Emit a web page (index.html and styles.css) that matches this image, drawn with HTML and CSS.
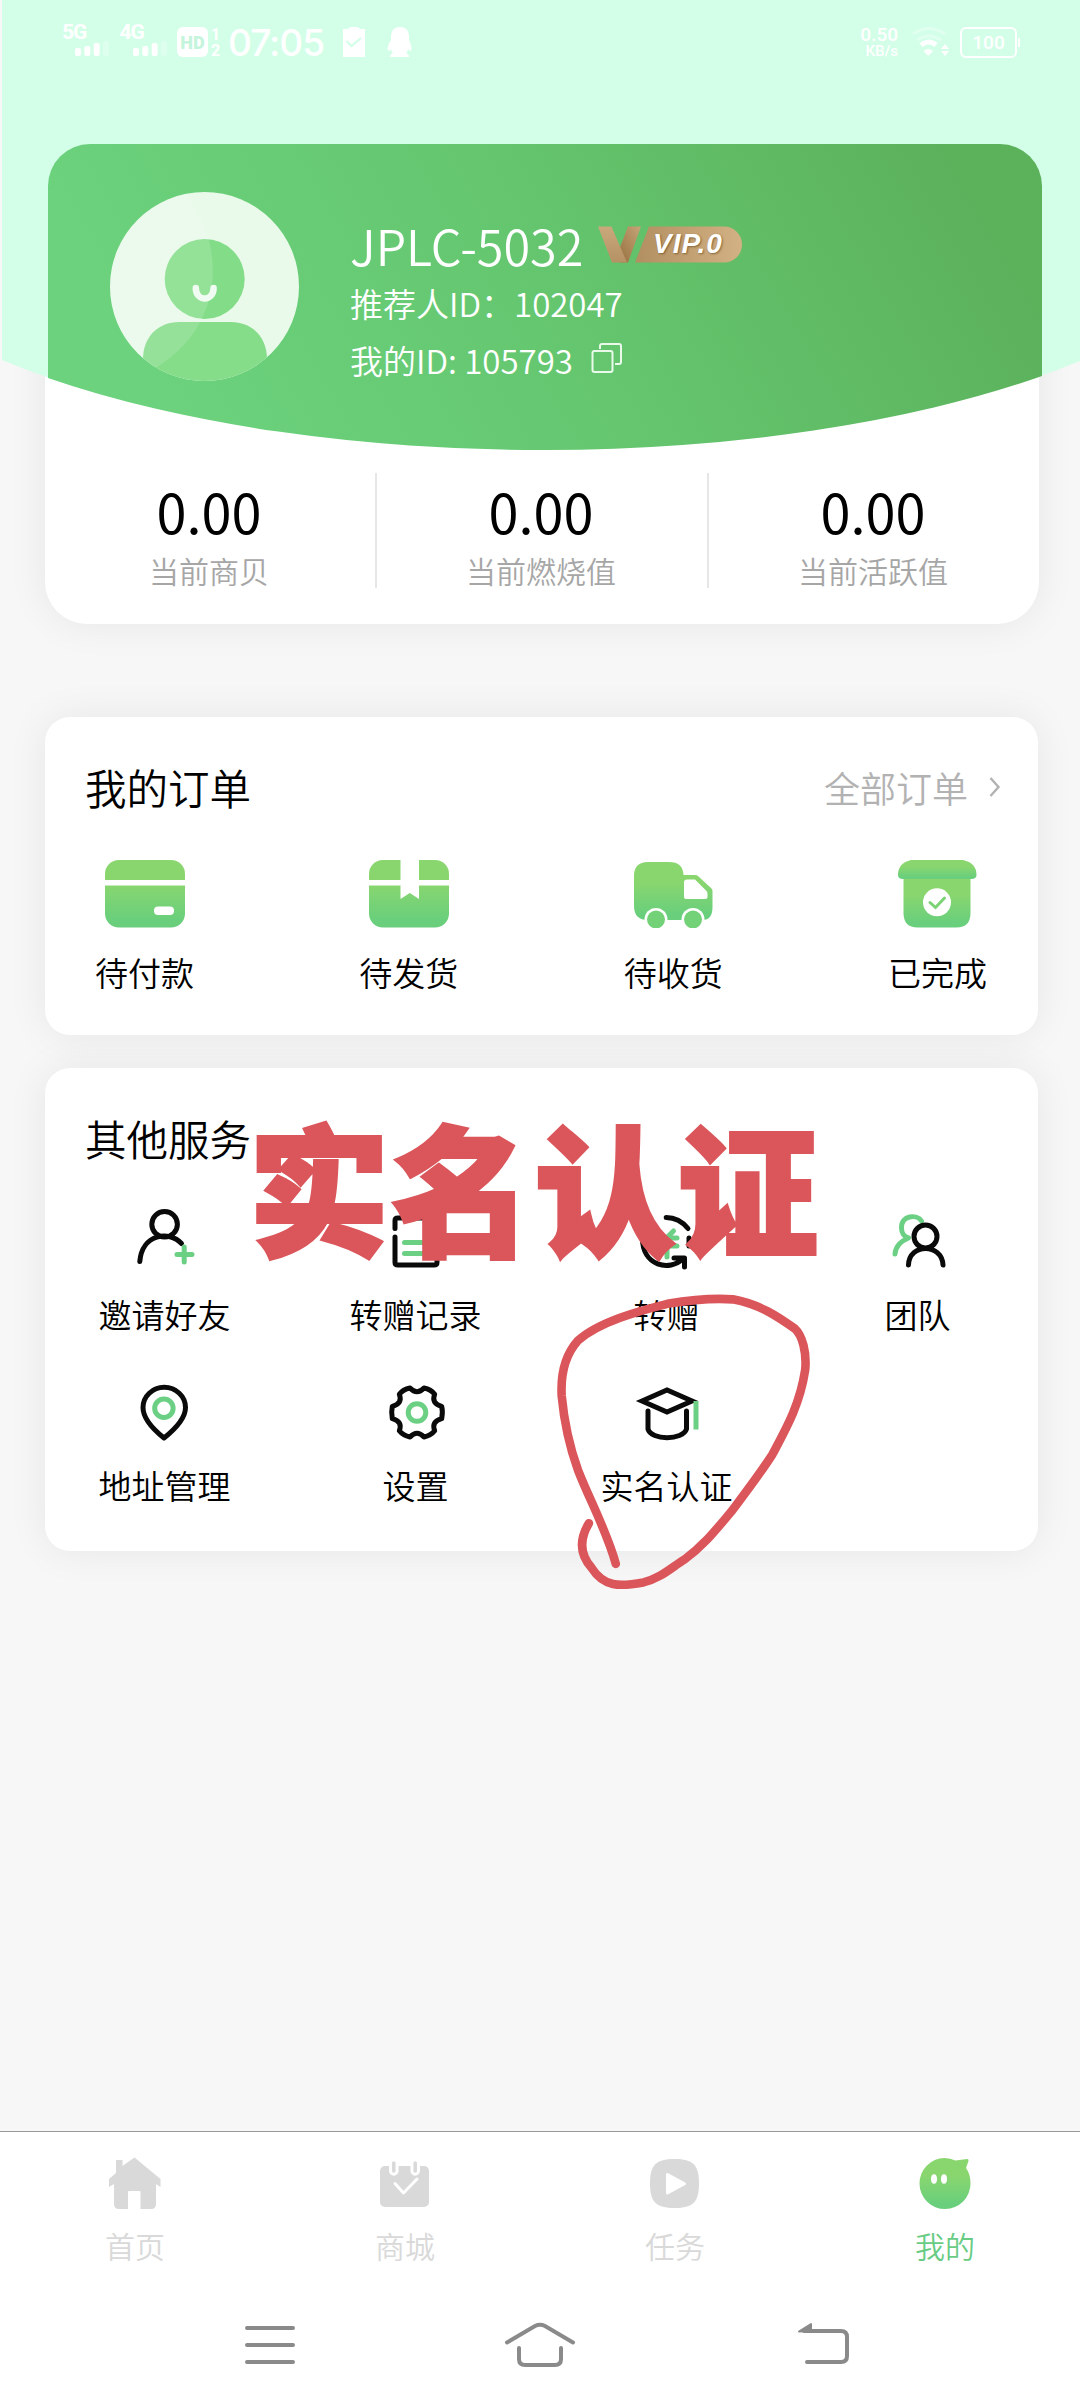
FILE: index.html
```html
<!DOCTYPE html>
<html lang="zh-CN">
<head>
<meta charset="utf-8">
<title>我的</title>
<link rel="stylesheet" href="styles.css">
</head>
<body>
<svg class="defs" width="0" height="0" aria-hidden="true">
  <defs>
    <linearGradient id="leaf" x1="0" y1="0" x2="0" y2="1">
      <stop offset="0.35" stop-color="#89d66f"/><stop offset="0.9" stop-color="#69cf7c"/>
    </linearGradient>
  </defs>
</svg>
<div class="phone">
  <div class="backdrop"></div>

  <header class="status">
    <div class="carrier">
      <span class="net">5G</span>
      <svg class="bars" viewBox="0 0 36 17"><g fill="#fff"><rect y="8" width="6" height="8" rx="2"/><rect x="9.300" y="6" width="6" height="10" rx="2"/><rect x="18.700" y="3" width="6" height="13" rx="2"/><rect x="28" y="1" width="6" height="15" rx="2" opacity=".25"/></g></svg>
    </div>
    <div class="carrier">
      <span class="net">4G</span>
      <svg class="bars" viewBox="0 0 36 17"><g fill="#fff"><rect y="8" width="6" height="8" rx="2"/><rect x="9.300" y="6" width="6" height="10" rx="2"/><rect x="18.700" y="3" width="6" height="13" rx="2"/><rect x="28" y="1" width="6" height="15" rx="2" opacity=".25"/></g></svg>
    </div>
    <span class="hd">HD</span>
    <span class="sims"><span>1</span><span>2</span></span>
    <span class="time">07:05</span>
    <svg class="clip" viewBox="0 0 22 30"><path fill="#fff" d="M0 2h5Q6 0 9 0h4q3 0 4 2h5v28H0z"/><path fill="none" stroke="#d3ffe8" stroke-width="2.200" d="M3.500 14l5 5L18 11"/></svg>
    <svg class="penguin" viewBox="0 0 26 30"><path fill="#fff" d="M13 0C7 0 4 4 4 10v3C1 17 0 21 1 24c1 0 2-1 3-2 0 2 1 3 2 4-2 1-3 2-3 4h19c0-2-1-3-3-4 1-1 2-2 2-4 1 1 2 2 3 2 1-3 0-7-2-11v-3c0-6-3-10-9-10z"/></svg>
    <span class="speed"><span>0.50</span><small>KB/s</small></span>
    <svg class="wifi" viewBox="0 0 38 30"><g fill="none" stroke="#fff"><path d="M1 7Q17-4 33 7" stroke-width="3" opacity=".3"/><path d="M5 13Q17 5 29 13" stroke-width="3" opacity=".3"/><path d="M9 18q8-6 15 0" stroke-width="5"/></g><path fill="#fff" d="M11.500 24q5-4 9.500 0l-4.700 5zM29 22l4-5 4 5zM29 24l4 5 4-5z"/></svg>
    <span class="battery">100</span>
  </header>

  <section class="member">
    <div class="member-head">
      <svg class="avatar" viewBox="0 0 189 189">
        <clipPath id="round"><circle cx="94.500" cy="94.500" r="94.500"/></clipPath>
        <g clip-path="url(#round)">
          <rect width="189" height="189" fill="#e9faea"/>
          <circle cx="94.700" cy="87" r="40" fill="#83dc88"/>
          <path fill="#85dd8a" d="M33 189v-22c0-22 15-37 36-37h52c21 0 36 15 36 37v22z"/>
          <path fill="#fff" opacity=".14" d="M0 0H74C96 28 103 55 103 80C102 120 82 153 47 175L0 189z"/>
        </g>
        <path fill="none" stroke="#f0fcf1" stroke-width="6.500" stroke-linecap="round" d="M85.800 96c0 14 17.800 14 17.800 0"/>
      </svg>
      <div class="identity">
        <div class="name-row">
          <span class="name">JPLC-5032</span>
          <span class="vip">
            <svg class="vip-v" viewBox="0 0 144 37">
              <defs>
                <linearGradient id="va" x1="0" y1="0" x2="0" y2="1"><stop offset="0" stop-color="#c9a97b"/><stop offset="1" stop-color="#b59164"/></linearGradient>
                <linearGradient id="vb" x1="0" y1="1" x2="1" y2="0"><stop offset="0" stop-color="#97703f"/><stop offset="1" stop-color="#c6a577"/></linearGradient>
                <linearGradient id="vc" x1="0" y1="0" x2="1" y2="0"><stop offset="0" stop-color="#b28f60"/><stop offset="1" stop-color="#d2b184"/></linearGradient>
              </defs>
              <path fill="url(#vb)" d="M30 0.500h13L30 36.500h-7.500l-1-14z"/>
              <path fill="url(#va)" d="M0 0.500h13.500L29 36.500H14z"/>
              <path fill="url(#vc)" d="M51 0.500h75a18 18 0 0 1 0 36H37z"/>
            </svg>
            <b>VIP.0</b>
          </span>
        </div>
        <div class="line">推荐人ID：102047</div>
        <div class="line own"><span>我的ID: 105793</span><svg class="copy" viewBox="0 0 32 32"><g fill="none" stroke="#e9faea" stroke-width="2"><rect x="1.500" y="9" width="20" height="21" rx="2"/><path d="M9 7V4q0-2 2-2h17q2 0 2 2v16q0 2-2 2h-4"/></g></svg></div>
      </div>
    </div>
    <div class="stats">
      <div class="stat"><strong>0.00</strong><span>当前商贝</span></div>
      <div class="stat"><strong>0.00</strong><span>当前燃烧值</span></div>
      <div class="stat"><strong>0.00</strong><span>当前活跃值</span></div>
    </div>
  </section>

  <section class="card orders">
    <div class="card-head">
      <h2>我的订单</h2>
      <a class="more">全部订单<svg viewBox="0 0 12 22"><path fill="none" stroke="#b2b2b2" stroke-width="2.400" d="M1.500 2L9.500 11L1.500 20"/></svg></a>
    </div>
    <div class="order-row">
      <div class="order">
        <svg viewBox="0 0 80 68"><rect width="80" height="67.500" rx="14" fill="url(#leaf)"/><path fill="#fff" d="M0 20h80v5.500H0z"/><rect x="49" y="46.500" width="20" height="8.500" rx="4" fill="#fff"/></svg>
        <span>待付款</span>
      </div>
      <div class="order">
        <svg viewBox="0 0 80 68"><rect width="80" height="67.500" rx="14" fill="url(#leaf)"/><path fill="#fff" d="M0 20h80v5.500H0zM31.500 0h18.500v39l-9.200-6-9.300 6z"/></svg>
        <span>待发货</span>
      </div>
      <div class="order">
        <svg viewBox="0 0 80 68"><path fill="url(#leaf)" d="M15 2h21q14 0 14.500 13H62q2 0 3 1l13 12q1.500 1 1.500 3v16q0 13-10 13H15Q1 60 1 46V16Q1 2 15 2z"/><path fill="#fff" d="M54 19.500h8l11 11q1.500 1 1.500 3V37q0 2-2 2H53q-2 0-2-2V22q0-2.500 3-2.500z"/><circle cx="23" cy="59.500" r="11.500" fill="#fff"/><circle cx="60" cy="59.500" r="11.500" fill="#fff"/><g fill="#73d177"><circle cx="23" cy="59.500" r="9"/><circle cx="60" cy="59.500" r="9"/></g></svg>
        <span>待收货</span>
      </div>
      <div class="order">
        <svg viewBox="0 0 80 68"><path fill="url(#leaf)" d="M6.500 17h67v36q0 14.500-14 14.500H20.500Q6.500 67.500 6.500 53z"/><path fill="url(#leaf)" d="M14 0h52q13.500 3 13.500 15 0 4-5 4H6q-5 0-5-4Q1 3 14 0z"/><circle cx="40" cy="42.300" r="14" fill="#fff"/><path fill="none" stroke="#7bd375" stroke-width="3" stroke-linecap="round" d="M33 42.500l5.500 5L47.500 38"/></svg>
        <span>已完成</span>
      </div>
    </div>
  </section>

  <section class="card services">
    <div class="card-head"><h2>其他服务</h2></div>
    <div class="service-grid">
      <div class="service">
        <svg viewBox="0 0 60 60"><circle cx="29.600" cy="16.300" r="12.800"/><path d="M4.800 53.500C7 26 34 22 46.500 35.500"/><path class="accent" d="M49.200 39v15M42 46.500h15"/></svg>
        <span>邀请好友</span>
      </div>
      <div class="service">
        <svg viewBox="0 0 60 60"><path d="M9 20.500V12.500q0-2.500 3-2.500h36q3 0 3 2.500v42q0 2.500-3 2.500H12q-3 0-3-2.500V29"/><path class="accent" d="M18.500 34.500h22M18.500 45.500h22"/></svg>
        <span>转赠记录</span>
      </div>
      <div class="service">
        <svg viewBox="0 0 60 60"><path d="M29.200 9.500Q42 9.500 51 20.500M52 30v8M5.500 30C5 58 33 64 46 50.500M37 50h10.500v9"/><path class="accent" d="M29.500 30l7-7M21 30h19M21 38h19M30 30v19"/></svg>
        <span>转赠</span>
      </div>
      <div class="service">
        <svg viewBox="0 0 60 60"><path class="accent" d="M33.500 13C29 6 13 7 13.500 20c0 5 3 9 7 10Q8 35 7 46"/><circle cx="37.500" cy="28.500" r="11.500"/><path d="M20.500 57C21 35 54 35 55 57"/></svg>
        <span>团队</span>
      </div>
      <div class="service low">
        <svg viewBox="0 0 60 60"><path d="M29 55C19 47 8 36 8 24.500a21 20 0 0 1 42.500 0C50.500 36 39 47 29 55z"/><circle class="accent" cx="28.900" cy="25.300" r="9.200"/></svg>
        <span>地址管理</span>
      </div>
      <div class="service low">
        <svg viewBox="-31 -29.500 60 60"><path d="M24.700-6.200Q26-1 24.700 6.200Q14 9 17.700 18.300Q14 23 7 24.500Q0 17 -7 24.500Q-14 23 -17.700 18.300Q-14 9 -24.700 6.200Q-26 0 -24.700-6.200Q-14-9 -17.700-18.300Q-14-23 -7-24.500Q0-17 7-24.500Q14-23 17.700-18.300Q14-9 24.700-6.200z"/><circle class="accent" r="8.800"/></svg>
        <span>设置</span>
      </div>
      <div class="service low">
        <svg viewBox="0 0 60 60"><path class="flat" d="M5 18L30 7L55 18L30 29z"/><path d="M11 28v18c3 11.500 35 11.500 38.500 0V28"/><path class="accent flat" d="M59 18v28.500"/></svg>
        <span>实名认证</span>
      </div>
    </div>
  </section>

  <nav class="tabs">
    <div class="tab">
      <svg viewBox="0 0 60 56"><path fill="#d9d9d9" d="M11 4h6.500v6L29.500 1.500 55.500 23v8L51 28v20q0 5-5 5H35.500V36q0-1-1-1H24q-1 0-1 1v17h-9Q9 53 9 48V28l-5 3v-8l7-6z"/></svg>
      <span>首页</span>
    </div>
    <div class="tab">
      <svg viewBox="0 0 60 56"><rect x="5" y="10" width="49" height="41" rx="5" fill="#d9d9d9"/><g stroke-linecap="round" fill="none"><path stroke="#fff" stroke-width="9.500" d="M18.800 7v8M40.200 7v8"/><path stroke="#d9d9d9" stroke-width="3.500" d="M18.800 7v8M40.200 7v8"/><path stroke="#fff" stroke-width="3" stroke-linejoin="round" d="M20 27.500l8.500 9.500L42 23"/></g></svg>
      <span>商城</span>
    </div>
    <div class="tab">
      <svg viewBox="0 0 60 56"><path fill="#d9d9d9" d="M29.500 3C48 3 54 9 54 27.500S48 52 29.500 52 5 46 5 27.500 11 3 29.500 3z"/><path fill="#fff" stroke="#fff" stroke-width="3" stroke-linejoin="round" d="M22.500 18.500v18.500l17-9.200z"/></svg>
      <span>任务</span>
    </div>
    <div class="tab active">
      <svg viewBox="0 0 60 56"><path fill="url(#leaf)" d="M29.500 2q6 0 11 2.500L52 3q2 0 1.500 2L51 12q4.500 6 4.500 15.500A25.500 25.500 0 1 1 29.500 2z"/><g fill="#fff"><ellipse cx="19" cy="23" rx="3" ry="4.800"/><ellipse cx="29" cy="23" rx="3" ry="4.800"/></g></svg>
      <span>我的</span>
    </div>
  </nav>

  <footer class="sysnav">
    <svg viewBox="0 0 80 50"><path d="M17 8h46M17 25h46M17 42h46"/></svg>
    <svg viewBox="0 0 80 50"><path d="M7 22.500L35 6q5-2.500 10 0l28 16.500M19 28v11q0 6 6 6h30q6 0 6-6V28"/></svg>
    <svg class="back" viewBox="0 0 80 50"><path d="M20 42h34q6 0 6-6V17q0-6-6-6H17"/><path class="solid" d="M12 11.500L24 4v7z"/></svg>
  </footer>

  <div class="note">实名认证</div>
  <svg class="scribble" viewBox="0 0 1568 1568"><path d="M142 1345C118 1385 110 1430 150 1475C185 1530 230 1530 300 1517C350 1505 380 1475 420 1450C475 1410 510 1365 555 1312C600 1252 640 1200 675 1145C715 1070 755 1000 770 900C775 850 762 800 740 780C690 745 640 710 560 695C490 690 430 698 370 708C290 728 170 760 110 815C70 860 60 920 63 975C70 1050 85 1120 110 1190C145 1280 195 1370 220 1463"/></svg>
</div>
</body>
</html>
```
FILE: styles.css
```css
* { box-sizing: border-box; }

body {
  margin: 0;
  font-family: "Noto Sans CJK SC", sans-serif;
  color: #000;
  background: #f6f6f6;
}

.defs { position: absolute; }

.phone {
  position: relative;
  width: 1080px;
  height: 2408px;
  overflow: hidden;
  display: flex;
  flex-direction: column;
  background: #f7f7f7;
  isolation: isolate;
}

/* mint wash with a curved lower edge, behind the profile */
.backdrop {
  position: absolute;
  inset: 0 0 auto 0;
  height: 460px;
  z-index: 1;
  background: #d3ffe8;
  clip-path: path("M2 0H1080V361A720 264 0 0 1 2 360Z");
}

/* status bar */
.status {
  position: relative;
  z-index: 2;
  flex: none;
  height: 144px;
  padding: 24px 63px 0 62px;
  display: flex;
  align-items: flex-start;
  color: #fff;
  font-family: Roboto, sans-serif;
}
.carrier { width: 57.500px; height: 34px; display: flex; flex-direction: column; }
.net { font-size: 21px; line-height: 17px; font-weight: 700; letter-spacing: -1px; }
.bars { width: 36px; height: 17px; margin: -1px 0 0 13px; }
.hd {
  width: 31px; height: 30px; margin-top: 3px;
  border-radius: 6px; background: #fff; color: #c4f5dc;
  font-size: 18px; line-height: 31px; font-weight: 900; text-align: center;
}
.sims { display: flex; flex-direction: column; width: 13px; margin: 3px 0 0 1px; font-size: 16px; line-height: 16px; font-weight: 700; text-align: center; }
.time { width: 100px; margin: 3px 0 0 6px; font: 500 37px/31px Inter, sans-serif; letter-spacing: -1px; white-space: nowrap; }
.clip { width: 22px; height: 30px; margin: 3px 0 0 15px; }
.penguin { width: 26px; height: 30px; margin: 3px 0 0 22px; }
.speed { margin: 3px 14px 0 auto; display: flex; flex-direction: column; text-align: right; font-size: 19px; line-height: 16px; font-weight: 500; }
.speed small { font-size: 15px; line-height: 16px; }
.wifi { width: 38px; height: 30px; margin: 3px 10px 0 0; }
.battery {
  position: relative; width: 57px; height: 31px; margin-top: 3px;
  border: 2px solid #fff; border-radius: 6px;
  font-size: 19px; line-height: 28px; font-weight: 500; text-align: center;
}
.battery::after { content: ""; position: absolute; right: -5px; top: 9px; width: 2px; height: 9px; background: #fff; }

/* profile card */
.member {
  flex: none;
  width: 994px;
  height: 480px;
  margin-left: 45px;
  border-radius: 0 0 42px 42px;
  background: #fff;
  box-shadow: 0 0 40px rgba(0, 0, 0, .07);
}
.member-head {
  position: relative;
  z-index: 2;
  width: 994px;
  height: 306px;
  margin-left: 3px;
  padding: 48px 0 0 62px;
  display: flex;
  background: linear-gradient(60deg, #6cd27d 12%, #64c56e 53%, #5cb15b 92%);
  clip-path: path("M42 0H952A42 42 0 0 1 994 42V232A720 264 0 0 1 0 234V42A42 42 0 0 1 42 0Z");
  color: #fff;
}
.avatar { flex: none; width: 189px; height: 189px; }
.identity { margin-left: 51px; padding-top: 19px; }
.name-row { display: flex; align-items: center; height: 67px; }
.name { width: 232px; font-size: 48.500px; line-height: 66px; font-weight: 350; white-space: nowrap; }
.vip { position: relative; width: 144px; height: 37px; margin: 0 0 0 16px; display: flex; }
.vip-v { position: absolute; inset: 0; width: 144px; height: 37px; }
.vip b {
  position: relative;
  margin-left: 55px;
  font: italic 700 28px/36px "Liberation Sans", sans-serif;
  letter-spacing: 1px;
  text-shadow: 1px 1px 2px rgba(90, 60, 20, .6);
}
.line { display: flex; align-items: center; height: 50px; font-size: 33px; font-weight: 350; white-space: nowrap; }
.own { margin-top: 7px; }
.copy { width: 32px; height: 32px; margin: -4px 0 0 18px; }

.stats { display: flex; margin-top: 23px; height: 115px; }
.stat { flex: 1; display: flex; flex-direction: column; align-items: center; }
.stat + .stat { border-left: 2px solid #e6e6e6; padding-right: 2px; }
.stat strong { font-size: 54px; line-height: 75px; font-weight: 400; }
.stat span { font-size: 30px; line-height: 45px; font-weight: 350; color: #a6a6a6; }
.stat:first-child { padding-right: 2px; }

/* white cards */
.card {
  flex: none;
  width: 993px;
  margin-left: 45px;
  padding: 0 40px;
  border-radius: 25px;
  background: #fff;
  box-shadow: 0 0 40px rgba(0, 0, 0, .07);
}
.orders { height: 318px; margin-top: 93px; }
.services { height: 483px; margin-top: 33px; }
.card-head { display: flex; justify-content: space-between; align-items: center; height: 60px; margin-top: 40px; }
.card-head h2 { margin: 0; font-size: 41.500px; font-weight: 350; line-height: 60px; }
.more { display: flex; align-items: center; gap: 21px; margin-right: -3px; font-size: 36px; font-weight: 350; color: #b2b2b2; }
.more svg { width: 12px; height: 22px; }

.order-row { display: flex; justify-content: space-between; margin: 43px 11px 0 10px; }
.order { display: flex; flex-direction: column; align-items: center; width: 99px; }
.order svg { width: 80px; height: 68px; }
.order span { margin-top: 20px; font-size: 33px; line-height: 48px; font-weight: 350; white-space: nowrap; }

.service-grid { display: grid; grid-template-columns: repeat(4, 251px); grid-auto-rows: 171px; margin: 40px 0 0 -46px; }
.service { display: flex; flex-direction: column; align-items: center; }
.service svg { width: 60px; height: 60px; overflow: visible; fill: none; stroke: #0a0a0a; stroke-width: 5; stroke-linecap: round; stroke-linejoin: round; }
.service .accent { stroke: #6bd084; }
.service .flat { stroke-linecap: butt; stroke-linejoin: miter; }
.service span { margin-top: 22px; font-size: 33px; line-height: 48px; font-weight: 350; }
.low { padding-top: 4px; }
.low span { margin-top: 18px; }

/* bottom tabs */
.tabs { flex: none; display: flex; height: 145px; margin-top: 580px; padding-top: 24px; border-top: 1px solid #999; background: #fff; }
.tab { flex: 1; display: flex; flex-direction: column; align-items: center; color: #d9d9d9; font-size: 30px; font-weight: 350; }
.tab svg { width: 60px; height: 56px; }
.tab span { margin-top: 11px; line-height: 44px; }
.active { color: #69cc84; }

/* system navigation */
.sysnav { flex: 1; display: flex; justify-content: center; gap: 190px; padding: 44px 0 0; background: #fff; }
.sysnav svg { width: 80px; height: 50px; fill: none; stroke: #8a8a8a; stroke-width: 4; stroke-linecap: round; }
.sysnav .solid { fill: #8a8a8a; stroke-width: 2; stroke-linejoin: round; }
.sysnav .back { margin: 0 -17px 0 17px; }

/* hand-drawn annotation over the page */
.note {
  position: absolute;
  z-index: 3;
  left: 249px;
  top: 1081px;
  font-size: 140px;
  line-height: 207px;
  font-weight: 900;
  letter-spacing: 3px;
  color: #db565b;
  -webkit-text-stroke: 4px #db565b;
  white-space: nowrap;
}
.scribble { position: absolute; z-index: 3; left: 540px; top: 1060px; width: 540px; height: 540px; fill: none; stroke: #db565b; stroke-width: 25; stroke-linecap: round; }
```
